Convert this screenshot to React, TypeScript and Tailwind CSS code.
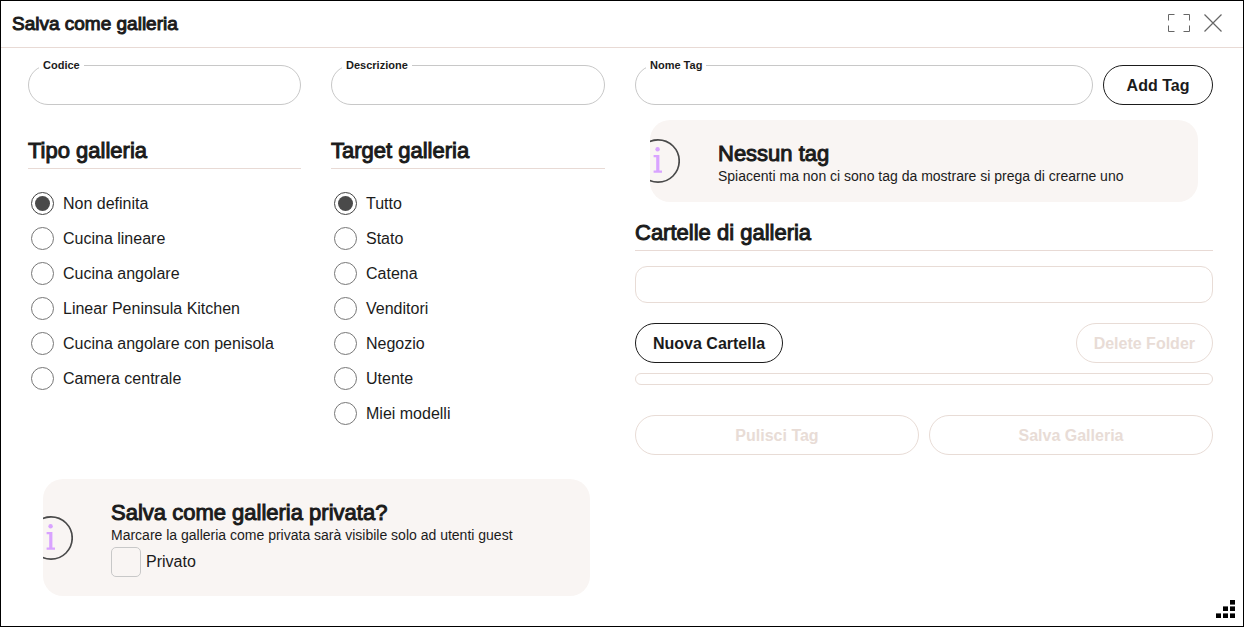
import React, { useState } from 'react';

const GALLERY_TYPES = [
  'Non definita',
  'Cucina lineare',
  'Cucina angolare',
  'Linear Peninsula Kitchen',
  'Cucina angolare con penisola',
  'Camera centrale',
];

const GALLERY_TARGETS = ['Tutto', 'Stato', 'Catena', 'Venditori', 'Negozio', 'Utente', 'Miei modelli'];

interface TextFieldProps {
  id: string;
  label: string;
}

const TextField: React.FC<TextFieldProps> = ({ id, label }) => (
  <div className="relative min-w-0 flex-1">
    <input
      id={id}
      type="text"
      className="block h-10 w-full rounded-full border border-[#c8c8c8] bg-white px-4 text-base outline-none focus:border-[#1b1b1b]"
    />
    <label htmlFor={id} className="absolute -top-2 left-[11px] bg-white px-1 text-[11px] leading-4 font-bold">
      {label}
    </label>
  </div>
);

const SectionTitle: React.FC<{ children: React.ReactNode }> = ({ children }) => (
  <h2 className="border-b border-[#e8dad5] pt-0.5 text-[22px] leading-[34px] [-webkit-text-stroke:1px]">{children}</h2>
);

interface RadioListProps {
  name: string;
  options: string[];
}

const RadioList: React.FC<RadioListProps> = ({ name, options }) => {
  const [selected, setSelected] = useState(options[0]);

  return (
    <div role="radiogroup" aria-label={name} className="mt-[17px] pl-[3px]">
      {options.map((option) => (
        <label key={option} className="flex h-[35px] items-center gap-[9px] text-base">
          <input
            type="radio"
            name={name}
            checked={selected === option}
            onChange={() => setSelected(option)}
            className="size-[23px] shrink-0 appearance-none rounded-full border border-[#777] bg-white bg-clip-content p-[3px] checked:border-[#444] checked:bg-[#4a4a4a]"
          />
          {option}
        </label>
      ))}
    </div>
  );
};

interface InfoCardProps {
  title: string;
  text: string;
  children?: React.ReactNode;
}

const InfoCard: React.FC<InfoCardProps> = ({ title, text, children }) => (
  <div className="mx-[15px] flex items-center gap-[38px] overflow-hidden rounded-[20px] bg-[#f9f5f3]">
    <svg width="30" height="46" viewBox="0 0 30 46" fill="none" className="shrink-0" aria-hidden="true">
      <circle cx="8" cy="23" r="21.2" stroke="#4a4a4a" strokeWidth="1.7" />
      <circle cx="7.6" cy="11.3" r="2.2" fill="#d9a3ff" />
      <path d="M3.6 17h5.8v15.6h2.6v2.2H3.6v-2.2h2.6V19.2H3.6z" fill="#d9a3ff" />
    </svg>
    <div className="min-w-0 pt-[22px] pr-4 pb-4">
      <h3 className="text-[22px] leading-6 [-webkit-text-stroke:1px]">{title}</h3>
      <p className="text-sm leading-5">{text}</p>
      {children}
    </div>
  </div>
);

interface PillButtonProps {
  children: React.ReactNode;
  disabled?: boolean;
  className?: string;
}

const PillButton: React.FC<PillButtonProps> = ({ children, disabled, className = '' }) => (
  <button
    type="button"
    disabled={disabled}
    className={`h-10 rounded-full border border-[#1b1b1b] bg-white px-[17px] pt-0.5 text-base font-bold disabled:border-[#e8dcd6] disabled:text-[#e8dcd6] ${className}`}
  >
    {children}
  </button>
);

const App: React.FC = () => {
  return (
    <div
      role="dialog"
      aria-labelledby="dialog-title"
      className="relative flex min-h-screen flex-col border border-black bg-white font-['Liberation_Sans',Arial,sans-serif] text-[#1b1b1b]"
    >
      <header className="flex h-[47px] items-center justify-between border-b border-[#e8dad5] pr-[21px] pl-[11px]">
        <h1 id="dialog-title" className="text-[19px] leading-6 [-webkit-text-stroke:1px]">
          Salva come galleria
        </h1>
        <div className="flex items-center gap-3 pb-0.5 text-[#666]">
          <button type="button" aria-label="Schermo intero">
            <svg width="24" height="20" viewBox="0 0 24 20" fill="none" stroke="currentColor" className="block">
              <path d="M.5 7.5v-6h6M15.5 1.5h6v6M21.5 12.5v6h-6M6.5 18.5h-6v-6" />
            </svg>
          </button>
          <button type="button" aria-label="Chiudi">
            <svg width="18" height="18" viewBox="0 0 18 18" fill="none" stroke="currentColor" className="block">
              <path d="M.5.5l17 17M17.5.5l-17 17" strokeWidth="1.2" />
            </svg>
          </button>
        </div>
      </header>

      <main className="grid flex-1 grid-cols-[577fr_578fr] items-start gap-[30px] pt-[17px] pr-[30px] pb-[30px] pl-[27px]">
        <div>
          <div className="grid grid-cols-[273fr_274fr] gap-[30px]">
            <section>
              <div className="mb-[27px] flex">
                <TextField id="code" label="Codice" />
              </div>
              <SectionTitle>Tipo galleria</SectionTitle>
              <RadioList name="Tipo galleria" options={GALLERY_TYPES} />
            </section>
            <section>
              <div className="mb-[27px] flex">
                <TextField id="description" label="Descrizione" />
              </div>
              <SectionTitle>Target galleria</SectionTitle>
              <RadioList name="Target galleria" options={GALLERY_TARGETS} />
            </section>
          </div>

          <div className="mt-12">
            <InfoCard
              title="Salva come galleria privata?"
              text="Marcare la galleria come privata sarà visibile solo ad utenti guest"
            >
              <label className="flex items-center gap-[5px] pt-0.5 pb-[3px] text-base">
                <input
                  type="checkbox"
                  className="size-[30px] shrink-0 appearance-none rounded-[5px] border border-[#c8c8c8] checked:bg-[#4a4a4a]"
                />
                Privato
              </label>
            </InfoCard>
          </div>
        </div>

        <div>
          <div className="mb-[15px] flex gap-2.5">
            <TextField id="tag-name" label="Nome Tag" />
            <PillButton className="min-w-[110px]">Add Tag</PillButton>
          </div>

          <InfoCard title="Nessun tag" text="Spiacenti ma non ci sono tag da mostrare si prega di crearne uno" />

          <div className="mt-3">
            <SectionTitle>Cartelle di galleria</SectionTitle>
          </div>
          <div className="mt-[15px] h-[37px] rounded-xl border border-[#e8dcd6]" />

          <div className="mt-5 flex items-center justify-between">
            <PillButton>Nuova Cartella</PillButton>
            <PillButton disabled>Delete Folder</PillButton>
          </div>
          <div className="mt-2.5 h-3 rounded-full border border-[#e8dcd6]" />

          <div className="mt-[30px] grid grid-cols-2 gap-2.5">
            <PillButton disabled>Pulisci Tag</PillButton>
            <PillButton disabled>Salva Galleria</PillButton>
          </div>
        </div>
      </main>

      {/* resize grip */}
      <svg width="20" height="18" viewBox="0 0 20 18" className="absolute right-[7px] bottom-2 cursor-se-resize" aria-hidden="true">
        <path d="M14 0h5v4h-5zM7 6h5v5H7zM14 6h5v5h-5zM0 13h5v5H0zM7 13h5v5H7zM14 13h5v5h-5z" fill="#000" />
        <path d="M14 4h5v1h-5zM7 6h5v1H7zM14 6h5v1h-5zM0 13h5v1H0zM7 13h5v1H7zM14 13h5v1h-5z" fill="#666" />
      </svg>
    </div>
  );
};

export default App;
